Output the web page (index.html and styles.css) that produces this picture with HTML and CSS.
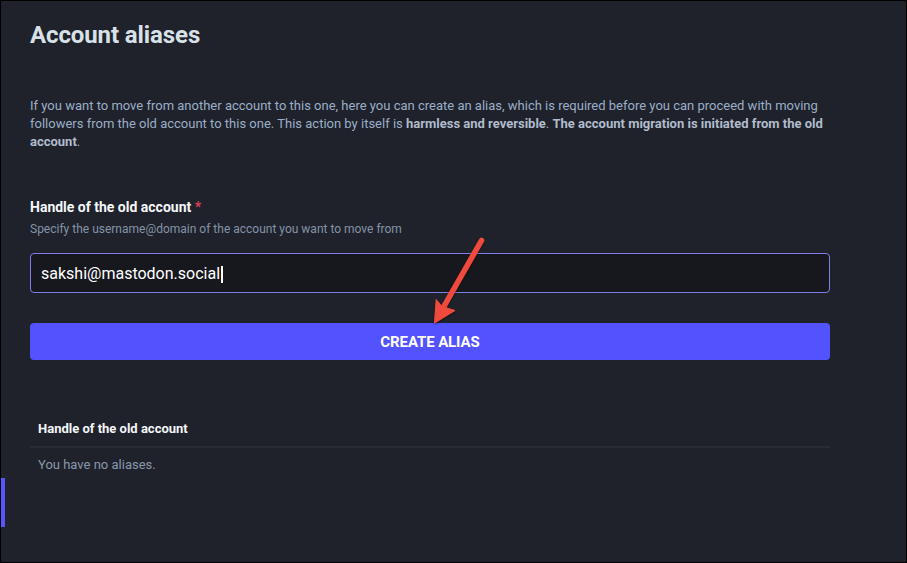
FILE: index.html
```html
<!DOCTYPE html>
<html lang="en">
<head>
<meta charset="utf-8">
<title>Account aliases</title>
<link rel="stylesheet" href="styles.css">
</head>
<body>
<div class="frame">
  <span class="nav-indicator"></span>
  <main class="content">
    <h1 class="title">Account aliases</h1>
    <p class="intro">If you want to move from another account to this one, here you can create an alias, which is required before you can proceed with moving followers from the old account to this one. This action by itself is <strong>harmless and reversible</strong>. <strong>The account migration is initiated from the old account</strong>.</p>

    <form class="form">
      <div class="field">
        <label class="label">Handle of the old account <abbr class="req">*</abbr></label>
        <span class="hint">Specify the username@domain of the account you want to move from</span>
        <div class="input"><span class="value">sakshi@mastodon.social</span><span class="caret"></span></div>
      </div>
      <div class="button">CREATE ALIAS</div>
    </form>

    <table class="table">
      <thead><tr><th>Handle of the old account</th></tr></thead>
      <tbody><tr><td>You have no aliases.</td></tr></tbody>
    </table>
  </main>

  <svg class="arrow" width="70" height="100" viewBox="420 230 70 100" aria-hidden="true">
    <defs>
      <filter id="sh" x="-30%" y="-30%" width="160%" height="160%">
        <feDropShadow dx="0" dy="1" stdDeviation="1.2" flood-color="#000" flood-opacity="0.55"/>
      </filter>
    </defs>
    <g filter="url(#sh)" fill="#f04a3c" stroke="#f04a3c">
      <line x1="481.5" y1="240.5" x2="443" y2="308" stroke-width="5.5" stroke-linecap="round"/>
      <path d="M434.5 323 L436.2 299.5 L442 306.5 L455 310.5 Z" stroke-width="1" stroke-linejoin="round"/>
    </g>
  </svg>
</div>
</body>
</html>
```

FILE: styles.css
```css
* { box-sizing: border-box; }

html, body {
  margin: 0;
  padding: 0;
  background: #000;
}

body {
  font-family: Roboto, "Noto Sans", "Liberation Sans", sans-serif;
}

.frame {
  position: relative;
  width: 907px;
  height: 563px;
  border: 1px solid #000;
  background: #1f222a;
  overflow: hidden;
}

.nav-indicator {
  position: absolute;
  left: 0;
  top: 477px;
  width: 4px;
  height: 49px;
  background: #5656ff;
}

.content {
  width: 858px;
  padding: 20px 0 0 29px;
}

.title {
  margin: 0;
  font-size: 24px;
  line-height: 28px;
  font-weight: 700;
  color: #d9e1e8;
  letter-spacing: -0.1px;
}

.intro {
  margin: 48px 0 0;
  width: 800px;
  font-size: 13px;
  line-height: 18px;
  color: #9baec8;
}

.intro strong {
  font-weight: 700;
  color: #b0bccd;
}

.form {
  margin-top: 46px;
  width: 800px;
  display: flex;
  flex-direction: column;
}

.field {
  display: flex;
  flex-direction: column;
}

.label {
  font-size: 14px;
  line-height: 20px;
  font-weight: 700;
  color: #f4f6fa;
}

.req {
  color: #df405a;
  text-decoration: none;
  font-weight: 700;
}

.hint {
  margin-top: 4px;
  font-size: 12px;
  line-height: 16px;
  color: #8493a9;
}

.input {
  margin-top: 16px;
  height: 40px;
  display: flex;
  align-items: center;
  padding: 0 10px;
  background: #17181d;
  border: 1px solid #7d7ee6;
  border-radius: 4px;
  font-size: 16px;
  color: #ffffff;
}

.caret {
  width: 1.5px;
  height: 17px;
  margin-left: 1px;
  margin-top: 2px;
  background: #ffffff;
}

.button {
  margin-top: 30px;
  height: 37px;
  display: flex;
  align-items: center;
  justify-content: center;
  background: #5252ff;
  border-radius: 4px;
  font-size: 15px;
  font-weight: 700;
  color: #ffffff;
  letter-spacing: -0.1px;
}

.table {
  margin-top: 52px;
  width: 800px;
  border-collapse: collapse;
}

.table th {
  text-align: left;
  padding: 8px 8px 8px;
  font-size: 13px;
  line-height: 18px;
  font-weight: 700;
  color: #f4f6fa;
  border-bottom: 2px solid #282c35;
}

.table td {
  padding: 8px 8px;
  font-size: 13px;
  line-height: 18px;
  color: #8a97ac;
}

.arrow {
  position: absolute;
  left: 419px;
  top: 229px;
  overflow: visible;
}
```
